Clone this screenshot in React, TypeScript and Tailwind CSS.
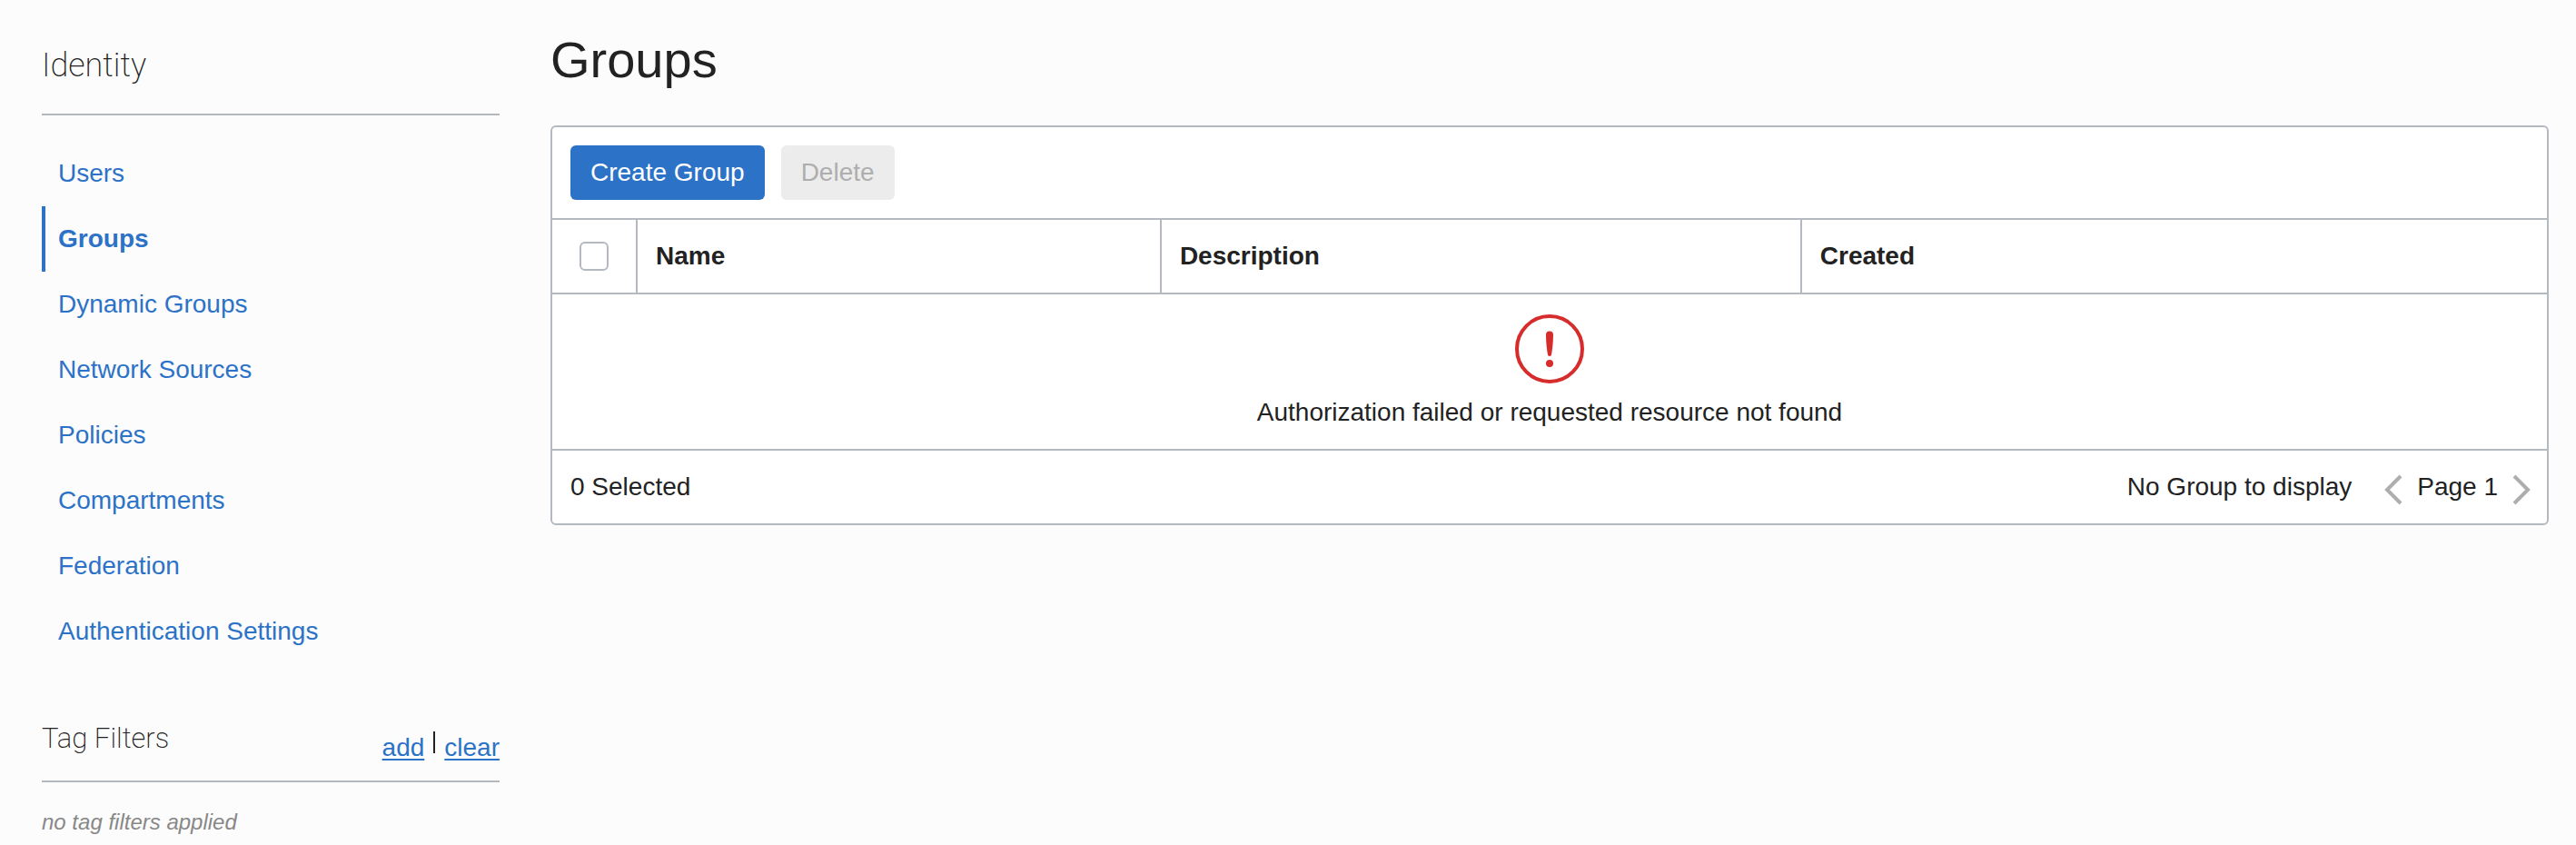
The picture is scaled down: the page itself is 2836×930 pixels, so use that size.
const links = [
  "Users",
  "Groups",
  "Dynamic Groups",
  "Network Sources",
  "Policies",
  "Compartments",
  "Federation",
  "Authentication Settings",
];

const current = "Groups";

function Sidebar() {
  return (
    <aside className="w-[504px] shrink-0">
      <h2 className="border-b-2 border-[#b4b9c0] pt-12 pb-[29px] font-['Roboto',sans-serif] text-[36px] leading-[48px] font-extralight">
        Identity
      </h2>
      <nav aria-label="Identity" className="pt-7">
        <ul>
          {links.map((label) => (
            <li key={label}>
              <a
                href="#"
                aria-current={label === current ? "page" : undefined}
                className={
                  label === current
                    ? "flex h-[72px] items-center border-l-4 border-[#2c72c7] pl-3.5 font-bold text-[#2c72c7]"
                    : "flex h-[72px] items-center border-l-4 border-transparent pl-3.5 text-[#2c72c7]"
                }
              >
                {label}
              </a>
            </li>
          ))}
        </ul>
      </nav>
      <section>
        <div className="mt-14 flex items-start justify-between border-b-2 border-[#b4b9c0] pb-4">
          <h2 className="pt-0.5 font-['Roboto',sans-serif] text-[31px] leading-[48px] font-extralight">Tag Filters</h2>
          <div className="flex items-center gap-2.5 pt-4">
            <a href="#" className="text-[#2c72c7] underline decoration-2 underline-offset-3">
              add
            </a>
            <span aria-hidden="true" className="mb-3 h-6 w-0.5 bg-[#222222]" />
            <a href="#" className="text-[#2c72c7] underline decoration-2 underline-offset-3">
              clear
            </a>
          </div>
        </div>
        <p className="pt-[26px] text-[24px] leading-9 text-[#888888] italic">no tag filters applied</p>
      </section>
    </aside>
  );
}

function ErrorIcon() {
  return (
    <svg width="76" height="76" viewBox="0 0 76 76" fill="none" aria-hidden="true">
      <circle cx="38" cy="38" r="36" stroke="#d72c2c" strokeWidth="4" />
      <path
        d="M34 22.500a4 4 0 0 1 8 0c0 8-.8 15-1.900 21.500a2.100 2.100 0 0 1-4.200 0c-1.100-6.500-1.900-13.500-1.900-21.500z"
        fill="#d72c2c"
      />
      <circle cx="38" cy="54" r="4" fill="#d72c2c" />
    </svg>
  );
}

function Chevron({ d }: { d: string }) {
  return (
    <svg width="20" height="34" viewBox="0 0 20 34" fill="none" aria-hidden="true">
      <path d={d} stroke="#aeaeae" strokeWidth="4" />
    </svg>
  );
}

function GroupsPanel() {
  return (
    <div className="rounded-md border-2 border-[#b4b9c0] bg-white">
      <div className="flex gap-[18px] p-5">
        <button type="button" className="h-[60px] rounded-md bg-[#2c72c7] px-[22px] text-white">
          Create Group
        </button>
        <button type="button" disabled className="h-[60px] rounded-md bg-[#ececec] px-[22px] text-[#aeaeae]">
          Delete
        </button>
      </div>
      <table className="w-full table-fixed border-separate border-spacing-0 border-y-2 border-[#b4b9c0] text-left">
        <thead>
          <tr className="h-[82px]">
            <th className="w-[94px] border-r-2 border-b-2 border-[#b4b9c0] p-0 pl-[30px]">
              <input
                type="checkbox"
                aria-label="Select all groups"
                className="block size-8 appearance-none rounded-md border-2 border-[#b4b9c0] bg-white"
              />
            </th>
            <th className="w-[26.27%] border-r-2 border-b-2 border-[#b4b9c0] px-5 py-0">Name</th>
            <th className="w-[32.1%] border-r-2 border-b-2 border-[#b4b9c0] px-5 py-0">Description</th>
            <th className="border-b-2 border-[#b4b9c0] px-5 py-0">Created</th>
          </tr>
        </thead>
        <tbody>
          <tr>
            <td colSpan={4} className="px-5 pt-[22px] pb-5">
              <div className="flex flex-col items-center gap-3">
                <ErrorIcon />
                <p>Authorization failed or requested resource not found</p>
              </div>
            </td>
          </tr>
        </tbody>
      </table>
      <div className="flex h-20 items-center justify-between pr-[18px] pl-5">
        <span>0 Selected</span>
        <div className="flex items-center">
          <span className="mr-9">No Group to display</span>
          <button type="button" aria-label="Previous page" disabled className="pt-1.5">
            <Chevron d="M18 2 3 17l15 15" />
          </button>
          <span className="mx-4">Page 1</span>
          <button type="button" aria-label="Next page" disabled className="pt-1.5">
            <Chevron d="M2 2l15 15L2 32" />
          </button>
        </div>
      </div>
    </div>
  );
}

export default function App() {
  return (
    <div className="flex min-h-screen gap-14 bg-[#fcfcfc] pr-[30px] pl-[46px] font-['Liberation_Sans',Arial,sans-serif] text-[28px] leading-10 text-[#222222]">
      <Sidebar />
      <main className="min-w-0 flex-1">
        <h1 className="pt-8 pb-[38px] text-[56px] leading-[68px]">Groups</h1>
        <GroupsPanel />
      </main>
    </div>
  );
}
